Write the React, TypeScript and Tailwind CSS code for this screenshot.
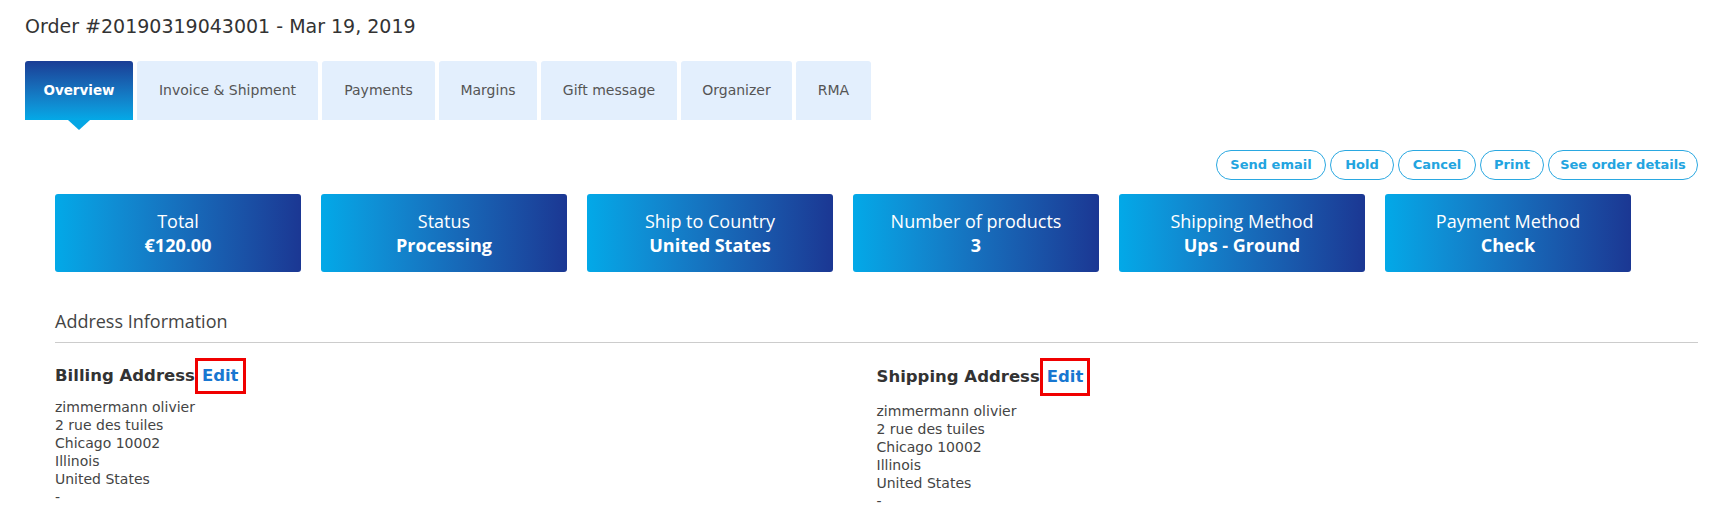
import React from 'react';

const tabs = [
  { label: 'Overview', width: 'w-[108px]', active: true },
  { label: 'Invoice & Shipment', width: 'w-[181px]' },
  { label: 'Payments', width: 'w-[113px]' },
  { label: 'Margins', width: 'w-[98px]' },
  { label: 'Gift message', width: 'w-[136px]' },
  { label: 'Organizer', width: 'w-[111px]' },
  { label: 'RMA', width: 'w-[75px]' },
];

const actions = [
  { label: 'Send email', width: 'w-[110px]' },
  { label: 'Hold', width: 'w-[64px]' },
  { label: 'Cancel', width: 'w-[78px]' },
  { label: 'Print', width: 'w-[64px]' },
  { label: 'See order details', width: 'w-[150px]' },
];

const stats = [
  { label: 'Total', value: '€120.00' },
  { label: 'Status', value: 'Processing' },
  { label: 'Ship to Country', value: 'United States' },
  { label: 'Number of products', value: '3' },
  { label: 'Shipping Method', value: 'Ups - Ground' },
  { label: 'Payment Method', value: 'Check' },
];

const addressLines = ['zimmermann olivier', '2 rue des tuiles', 'Chicago 10002', 'Illinois', 'United States', '-'];

const AddressBlock: React.FC<{ title: string; boxPad: string; linesGap: string }> = ({ title, boxPad, linesGap }) => (
  <div>
    <div className="flex items-center">
      <span className="text-[16.5px] leading-6 font-bold text-[#333]">{title}</span>
      <span className={`border-[3px] border-[#f00000] px-[4px] ${boxPad} text-[16.5px] leading-6 font-bold text-[#1877d1]`}>
        Edit
      </span>
    </div>
    <div className={`${linesGap} text-[14px] leading-[18px] text-[#444]`}>
      {addressLines.map((line, i) => (
        <div key={i}>{line}</div>
      ))}
    </div>
  </div>
);

export default function App() {
  return (
    <div className="min-h-screen bg-white px-[25px] pt-[14px] font-['DejaVu_Sans',sans-serif]">
      {/* Title */}
      <h1 className="text-[19px] leading-6 text-[#333]">Order #20190319043001 - Mar 19, 2019</h1>

      {/* Tabs */}
      <div className="mt-[23px] flex gap-[4px]">
        {tabs.map((tab) =>
          tab.active ? (
            <div
              key={tab.label}
              className={`relative ${tab.width} h-[59px] flex items-center justify-center rounded-t-[3px] bg-gradient-to-t from-[#03a9e7] to-[#1a3d95] text-[13.5px] font-bold text-white`}
            >
              {tab.label}
              <span className="absolute left-1/2 top-full -translate-x-1/2 w-0 h-0 border-l-[11px] border-r-[11px] border-t-[10px] border-l-transparent border-r-transparent border-t-[#05a6e4]" />
            </div>
          ) : (
            <div
              key={tab.label}
              className={`${tab.width} h-[59px] flex items-center justify-center rounded-t-[3px] bg-[#e3effd] text-[14px] text-[#555]`}
            >
              {tab.label}
            </div>
          )
        )}
      </div>

      <div className="pl-[30px]">
        {/* Actions */}
        <div className="mt-[30px] flex justify-end gap-[4px]">
          {actions.map((a) => (
            <button
              key={a.label}
              className={`${a.width} h-[30px] rounded-full border border-[#2aa8e1] bg-white text-[13px] font-bold text-[#22a4e0]`}
            >
              {a.label}
            </button>
          ))}
        </div>

        {/* Stat cards */}
        <div className="mt-[14px] flex gap-[20px] font-['Open_Sans',sans-serif]">
          {stats.map((s) => (
            <div
              key={s.label}
              className="w-[246px] h-[78px] rounded-[3px] bg-gradient-to-r from-[#02a9e8] to-[#1b3793] flex flex-col items-center justify-center text-white text-[18px] leading-6"
            >
              <span>{s.label}</span>
              <span className="font-bold">{s.value}</span>
            </div>
          ))}
        </div>

        {/* Address information */}
        <div className="mt-[37px] pb-[9px] border-b border-[#cccccc] font-['Open_Sans',sans-serif] text-[18px] leading-6 text-[#444]">
          Address Information
        </div>

        <div className="mt-[15px] grid grid-cols-2">
          <AddressBlock title="Billing Address" boxPad="py-[3px]" linesGap="mt-[4px]" />
          <AddressBlock title="Shipping Address" boxPad="py-[4px]" linesGap="mt-[6px]" />
        </div>
      </div>
    </div>
  );
}
